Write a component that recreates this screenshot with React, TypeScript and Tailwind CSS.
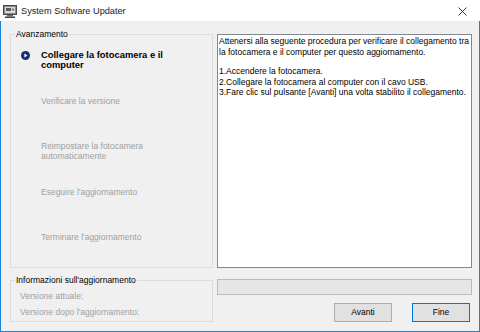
import React from "react";

const steps = [
  { id: 1, lines: ["Collegare la fotocamera e il", "computer"], active: true },
  { id: 2, lines: ["Verificare la versione"], active: false },
  { id: 3, lines: ["Reimpostare la fotocamera", "automaticamente"], active: false },
  { id: 4, lines: ["Eseguire l'aggiornamento"], active: false },
  { id: 5, lines: ["Terminare l'aggiornamento"], active: false },
];

function AppIcon() {
  return (
    <svg width="14" height="13" viewBox="0 0 14 13">
      <rect x="0.5" y="0.5" width="13" height="9" fill="#8a8a8a" stroke="#4a4a4a" />
      <rect x="2" y="2" width="10" height="6" fill="#d8d8d8" />
      <rect x="3" y="3" width="5" height="3" fill="#5a5a5a" />
      <circle cx="10" cy="4.5" r="1" fill="#5a5a5a" />
      <rect x="4" y="10" width="6" height="1.5" fill="#6a6a6a" />
      <rect x="2" y="11.5" width="10" height="1.5" fill="#444" />
    </svg>
  );
}

function PlayIcon() {
  return (
    <svg width="9" height="9" viewBox="0 0 9 9">
      <circle cx="4.5" cy="4.5" r="4.5" fill="#1c2f6e" />
      <path d="M3.4 2.4 L6.4 4.5 L3.4 6.6 Z" fill="#ffffff" />
    </svg>
  );
}

export default function App() {
  return (
    <div className="w-[480px] h-[332px] flex flex-col font-['Liberation_Sans',Arial,sans-serif] text-[8.5px] text-black overflow-hidden">
      {/* barra del titolo */}
      <div className="h-[21px] bg-white flex items-center">
        <div className="ml-[3px] mt-[1px]">
          <AppIcon />
        </div>
        <span className="ml-[4px] text-[9.2px] leading-[12px] text-[#1a1a1a]">System Software Updater</span>
        <div className="ml-auto mr-[13px] mt-[1px]">
          <svg width="9" height="9" viewBox="0 0 9 9">
            <path d="M0.5 0.5 L8.5 8.5 M8.5 0.5 L0.5 8.5" stroke="#222" strokeWidth="0.9" />
          </svg>
        </div>
      </div>

      {/* corpo */}
      <div className="flex-1 bg-[#f0f0f0] border-x border-b border-[#1883d7] pl-[9px] pr-[7px] flex flex-col">
        <div className="h-[247px] flex gap-[4px]">
          <fieldset className="w-[203px] mt-[9px] h-[238px] border border-[#dcdcdc] px-0">
            <legend className="ml-[4px] px-[1px] leading-[9px]">Avanzamento</legend>
            <div className="pt-[11px] pl-[10px] flex flex-col">
              {steps.map((s) => (
                <div key={s.id} className="h-[45.5px] flex">
                  <div className="w-[20px] pt-[0.5px]">{s.active && <PlayIcon />}</div>
                  <div
                    className={
                      s.active
                        ? "font-bold text-[9.4px] leading-[10.5px] -mt-[0.5px] text-black whitespace-nowrap"
                        : "leading-[10px] text-[#a0a0a0] whitespace-nowrap"
                    }
                  >
                    {s.lines.map((l) => (
                      <div key={l}>{l}</div>
                    ))}
                  </div>
                </div>
              ))}
            </div>
          </fieldset>

          <div className="w-[255px] mt-[13px] h-[234px] bg-white border border-[#828790] pt-[1px] pl-[1px] leading-[10.5px]">
            <p>Attenersi alla seguente procedura per verificare il collegamento tra</p>
            <p>la fotocamera e il computer per questo aggiornamento.</p>
            <div className="mt-[9px]">
              <p>1.Accendere la fotocamera.</p>
              <p>2.Collegare la fotocamera al computer con il cavo USB.</p>
              <p>3.Fare clic sul pulsante [Avanti] una volta stabilito il collegamento.</p>
            </div>
          </div>
        </div>

        <div className="flex gap-[4px]">
          <fieldset className="w-[203px] mt-[8px] border border-[#dcdcdc] px-0">
            <legend className="ml-[4px] px-[1px] leading-[9px]">Informazioni sull'aggiornamento</legend>
            <div className="pt-[3px] pl-[9px] text-[#a0a0a0] leading-[16px]">
              <div>Versione attuale:</div>
              <div>Versione dopo l'aggiornamento:</div>
            </div>
          </fieldset>

          <div className="w-[255px] flex flex-col">
            <div className="mt-[11px] h-[16px] bg-[#e6e6e6] border border-[#bcbcbc]" />
            <div className="mt-[8px] flex justify-end gap-[20px] pr-[2px]">
              <button className="w-[58px] h-[19px] bg-[#e1e1e1] border border-[#adadad] leading-[17px]">
                Avanti
              </button>
              <button className="w-[58px] h-[19px] bg-[#e1e1e1] border border-[#0078d7] leading-[17px]">
                Fine
              </button>
            </div>
          </div>
        </div>
      </div>
    </div>
  );
}
